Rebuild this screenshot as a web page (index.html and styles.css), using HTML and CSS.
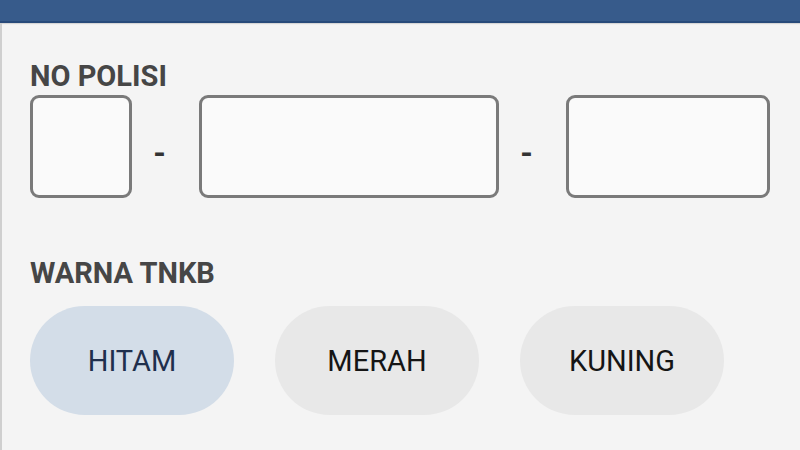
FILE: index.html
```html
<!DOCTYPE html>
<html lang="id">
<head>
    <meta charset="UTF-8">
    <meta name="viewport" content="width=device-width, initial-scale=1.0">
    <title>No Polisi</title>
    <link rel="stylesheet" href="styles.css">
</head>
<body>
    <div class="top-bar"></div>

    <div class="form-panel">
        <div class="field-label">NO POLISI</div>
        <div class="plate-row">
            <input class="plate-box plate-area" type="text" maxlength="2">
            <span class="dash">-</span>
            <input class="plate-box plate-number" type="text" maxlength="4">
            <span class="dash">-</span>
            <input class="plate-box plate-suffix" type="text" maxlength="3">
        </div>

        <div class="field-label label-color">WARNA TNKB</div>
        <div class="color-row">
            <button class="chip chip-active">HITAM</button>
            <button class="chip">MERAH</button>
            <button class="chip">KUNING</button>
        </div>
    </div>
</body>
</html>
```

FILE: styles.css
```css
body {
    font-family: Roboto, "Liberation Sans", Arial, sans-serif;
    background-color: #f4f4f4;
    margin: 0;
    height: 450px;
    overflow: hidden;
}
.top-bar {
    height: 21px;
    background: #375b8b;
    border-bottom: 2px solid #284a7a;
    box-shadow: 0 1px 1px rgba(0, 0, 0, 0.12);
}
.form-panel {
    border-left: 2px solid #cfcfcf;
    height: 427px;
    padding: 0 0 0 28px;
}
.field-label {
    font-size: 29px;
    font-weight: bold;
    color: #464646;
    line-height: 30px;
    padding-top: 38px;
}
.label-color {
    padding-top: 60px;
}
.plate-row {
    display: flex;
    align-items: center;
    margin-top: 4px;
}
.plate-box {
    box-sizing: border-box;
    height: 103px;
    border: 3px solid #7a7a7a;
    border-radius: 9px;
    background: #fafafa;
    margin: 0;
    padding: 0;
    outline: none;
}
.plate-area {
    width: 102px;
}
.plate-number {
    width: 300px;
}
.plate-suffix {
    width: 204px;
}
.dash {
    box-sizing: border-box;
    width: 67px;
    padding: 12px 12px 0 0;
    text-align: center;
    font-size: 32px;
    font-weight: bold;
    color: #333;
}
.color-row {
    display: flex;
    gap: 41px;
    margin-top: 18px;
}
.chip {
    width: 204px;
    height: 109px;
    border: none;
    border-radius: 55px;
    background: #e8e8e8;
    font-family: Roboto, "Liberation Sans", Arial, sans-serif;
    font-size: 29px;
    color: #151515;
    cursor: pointer;
}
.chip-active {
    background: #d3dde8;
    color: #1f2f4d;
}
```
